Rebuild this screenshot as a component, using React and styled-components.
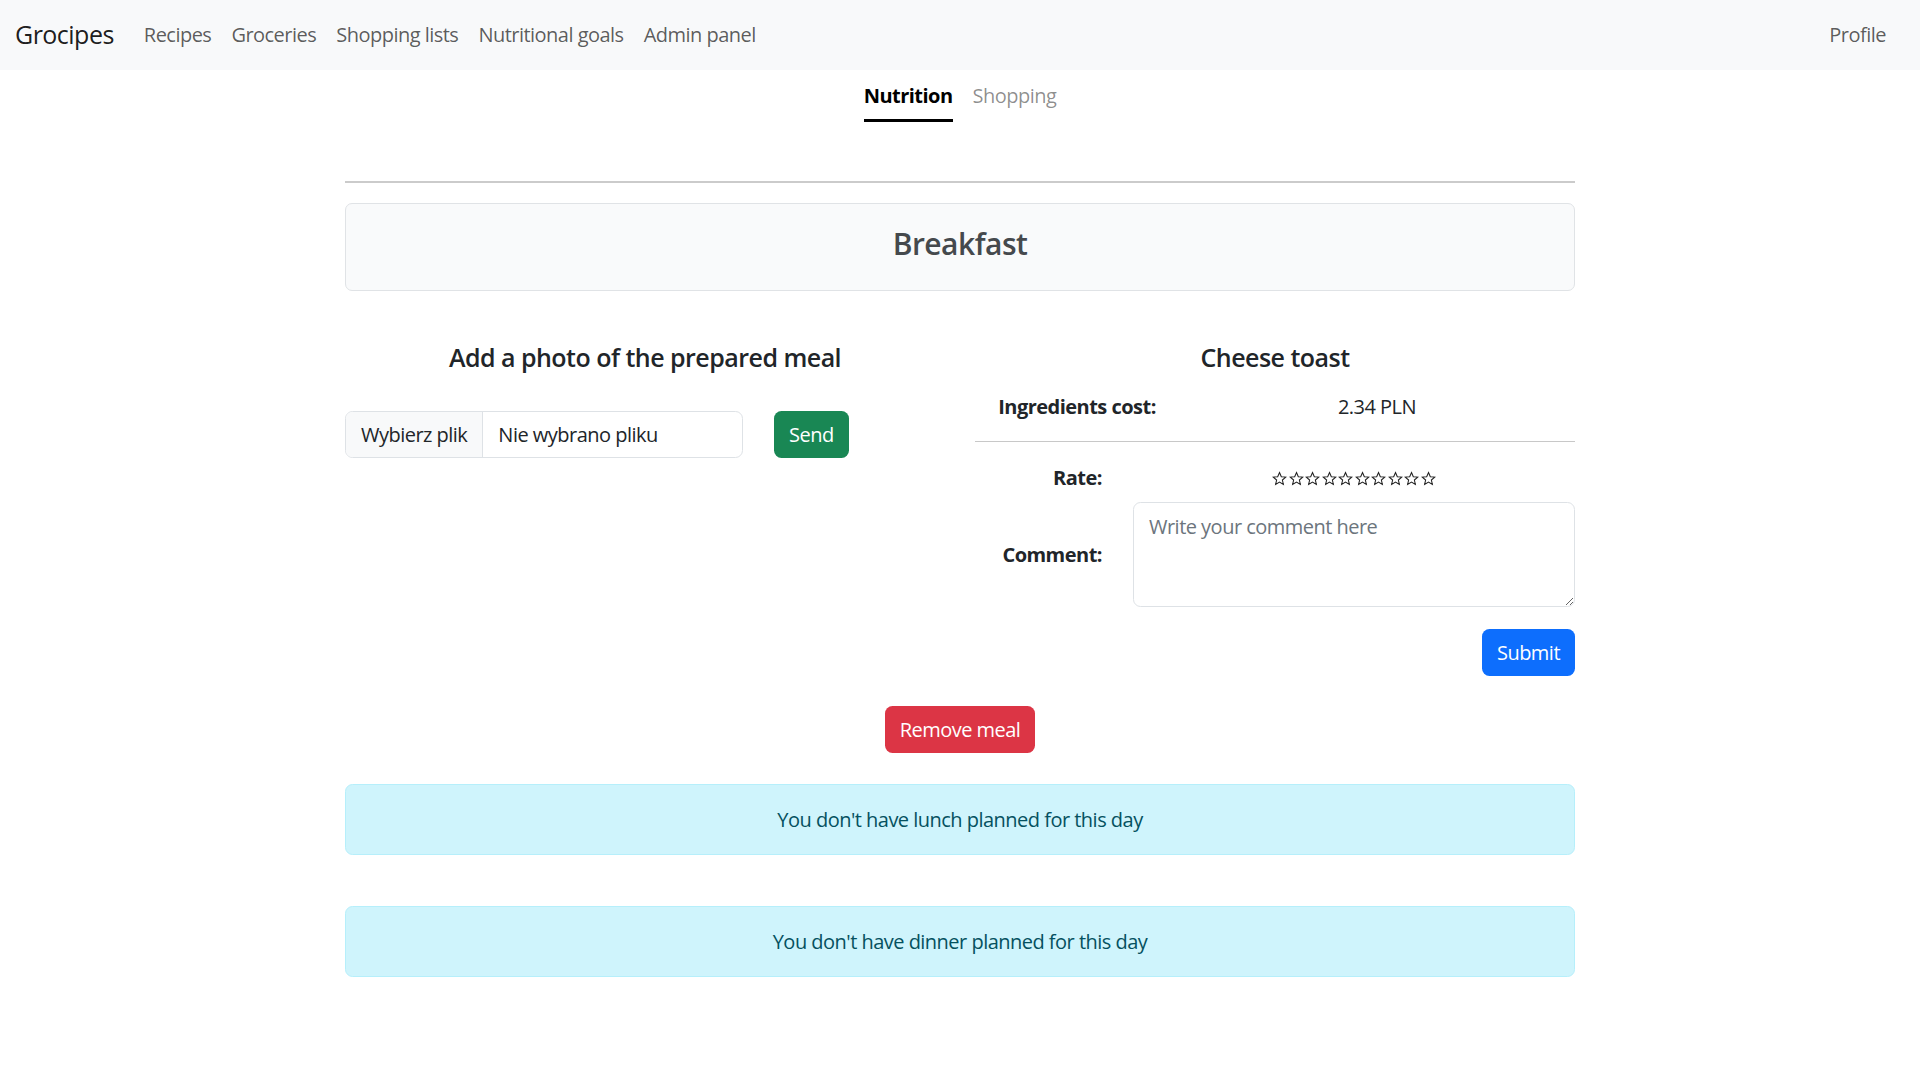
import React from "react";
import styled, { createGlobalStyle } from "styled-components";

const GlobalStyle = createGlobalStyle`
  body {
    margin: 0;
    font-family: "Open Sans", "Noto Sans", sans-serif;
    font-size: 20px;
    line-height: 1.5;
    letter-spacing: -0.026em;
    color: #212529;
    background: #fff;
  }
  * { box-sizing: border-box; }
`;

const navLinks = ["Recipes", "Groceries", "Shopping lists", "Nutritional goals", "Admin panel"];
const missingMeals = ["lunch", "dinner"];

const StarIcon = () => (
  <svg width="15" height="15" viewBox="0 0 24 24">
    <path
      d="M12 2.5l2.9 6.6 7.1.6-5.4 4.7 1.6 7-6.2-3.7-6.2 3.7 1.6-7L2 9.7l7.1-.6z"
      fill="none"
      stroke="#222"
      strokeWidth="1.7"
      strokeLinejoin="miter"
    />
  </svg>
);

const App = () => {
  return (
    <>
      <GlobalStyle />
      <Navbar>
        <Brand>Grocipes</Brand>
        <NavList>
          {navLinks.map((name) => (
            <NavLink key={name}>{name}</NavLink>
          ))}
        </NavList>
        <Profile>Profile</Profile>
      </Navbar>

      <Main>
        <Tabs>
          <Tab active>Nutrition</Tab>
          <Tab>Shopping</Tab>
        </Tabs>
        <Divider />

        <MealCard>Breakfast</MealCard>

        <Columns>
          <div>
            <Heading>Add a photo of the prepared meal</Heading>
            <UploadRow>
              <FileInput>
                <FileButton>Wybierz plik</FileButton>
                <FileName>Nie wybrano pliku</FileName>
              </FileInput>
              <Button variant="success">Send</Button>
            </UploadRow>
          </div>

          <div>
            <Heading>Cheese toast</Heading>
            <CostRow>
              <b>Ingredients cost:</b>
              <span>2.34 PLN</span>
            </CostRow>
            <FormRow>
              <Label>Rate:</Label>
              <Stars>
                {Array.from({ length: 10 }).map((_, i) => (
                  <Star key={i}>
                    <StarIcon />
                  </Star>
                ))}
              </Stars>
            </FormRow>
            <FormRow spaced>
              <Label>Comment:</Label>
              <CommentBox placeholder="Write your comment here" />
            </FormRow>
            <SubmitRow>
              <Button variant="primary">Submit</Button>
            </SubmitRow>
          </div>
        </Columns>

        <RemoveRow>
          <Button variant="danger">Remove meal</Button>
        </RemoveRow>

        {missingMeals.map((meal) => (
          <Alert key={meal}>You don't have {meal} planned for this day</Alert>
        ))}
      </Main>
    </>
  );
};

export default App;

const Navbar = styled.nav`
  height: 70px;
  background: #f8f9fa;
  display: flex;
  align-items: center;
  padding: 0 24px 1px 15px;
`;

const Brand = styled.div`
  font-size: 25px;
  color: rgba(0, 0, 0, 0.9);
  margin-right: 20px;
`;

const NavList = styled.div`
  display: flex;
`;

const NavLink = styled.div`
  padding: 0 10px;
  color: rgba(0, 0, 0, 0.65);
`;

const Profile = styled(NavLink)`
  margin-left: auto;
`;

const Main = styled.main`
  width: 1230px;
  margin: 0 auto;
`;

const Tabs = styled.div`
  display: flex;
  justify-content: center;
  gap: 20px;
`;

const Tab = styled.div`
  padding: 11px 0 8px;
  border-bottom: 3px solid ${({ active }) => (active ? "#000" : "transparent")};
  color: ${({ active }) => (active ? "#000" : "rgba(0, 0, 0, 0.45)")};
  font-weight: ${({ active }) => (active ? 700 : 400)};
`;

const Divider = styled.div`
  margin-top: 59px;
  border-top: 2px solid #cbcbcb;
`;

const MealCard = styled.div`
  margin-top: 20px;
  height: 88px;
  padding-bottom: 8px;
  border: 1px solid #e0e3e6;
  border-radius: 7px;
  background: #f9fafb;
  display: flex;
  align-items: center;
  justify-content: center;
  font-size: 30px;
  font-weight: 600;
  color: #45494d;
`;

const Columns = styled.div`
  margin-top: 51px;
  display: grid;
  grid-template-columns: 1fr 1fr;
  column-gap: 30px;
`;

const Heading = styled.h5`
  margin: 0;
  font-size: 25px;
  font-weight: 600;
  line-height: 30px;
  text-align: center;
`;

const UploadRow = styled.div`
  margin-top: 39px;
  display: flex;
  align-items: center;
  gap: 31px;
`;

const FileInput = styled.div`
  width: 398px;
  height: 47px;
  border: 1px solid #dee2e6;
  border-radius: 7.5px;
  display: flex;
  overflow: hidden;
`;

const FileButton = styled.div`
  background: #f8f9fa;
  border-right: 1px solid #dee2e6;
  padding: 0 15px;
  display: flex;
  align-items: center;
`;

const FileName = styled.div`
  padding: 0 15px;
  display: flex;
  align-items: center;
`;

const colors = {
  success: "#198754",
  primary: "#0d6efd",
  danger: "#dc3545",
};

const Button = styled.button`
  height: 47px;
  padding: 0 15px;
  border: none;
  border-radius: 7.5px;
  background: ${({ variant }) => colors[variant]};
  color: #fff;
  font-family: inherit;
  font-size: 20px;
  letter-spacing: inherit;
  cursor: pointer;
`;

const CostRow = styled.div`
  margin-top: 20px;
  padding-bottom: 19px;
  border-bottom: 1px solid #c8c8c8;
  display: grid;
  grid-template-columns: 204px 1fr;
  text-align: center;
  line-height: 30px;
`;

const FormRow = styled.div`
  margin-top: ${({ spaced }) => (spaced ? "9px" : "21px")};
  display: grid;
  grid-template-columns: 127px 1fr;
  column-gap: 31px;
  align-items: center;
`;

const Label = styled.div`
  font-weight: 700;
  text-align: right;
  line-height: 30px;
`;

const Stars = styled.div`
  display: flex;
  justify-content: center;
  align-items: center;
  height: 30px;
`;

const Star = styled.span`
  width: 16.5px;
  display: flex;
  justify-content: center;
`;

const CommentBox = styled.textarea`
  height: 105px;
  padding: 9px 15px;
  border: 1px solid #dee2e6;
  border-radius: 7.5px;
  font-family: inherit;
  font-size: 20px;
  letter-spacing: inherit;
  line-height: 30px;
  color: #212529;
  resize: vertical;
  &::placeholder {
    color: #6c757d;
  }
`;

const SubmitRow = styled.div`
  margin-top: 22px;
  display: flex;
  justify-content: flex-end;
`;

const RemoveRow = styled.div`
  margin-top: 30px;
  display: flex;
  justify-content: center;
`;

const Alert = styled.div`
  margin-top: 31px;
  & + & {
    margin-top: 51px;
  }
  padding: 19.5px;
  border: 1px solid #b6effb;
  border-radius: 7.5px;
  background: #cff4fc;
  color: #055160;
  text-align: center;
  line-height: 30px;
`;
